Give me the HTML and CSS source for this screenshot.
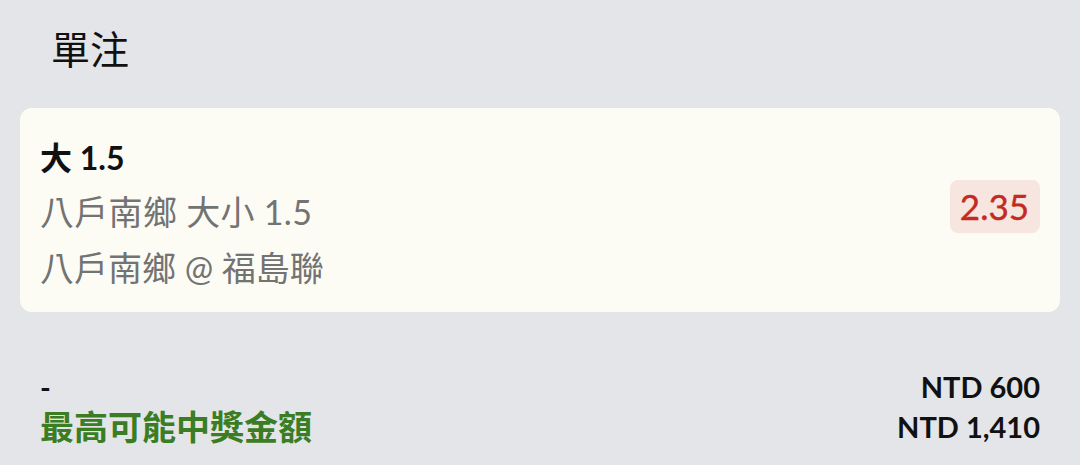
FILE: index.html
```html
<!DOCTYPE html>
<html lang="zh-Hant">
<head>
  <meta charset="UTF-8" />
  <title>單注</title>
  <link rel="stylesheet" href="styles.css">
</head>
<body>
  <div class="page">
    <h1 class="title">單注</h1>

    <!-- 投注卡片 -->
    <div class="bet-card">
      <div class="bet-info">
        <div class="selection">大 1.5</div>
        <div class="market">八戶南鄉 大小 1.5</div>
        <div class="match">八戶南鄉 @ 福島聯</div>
      </div>
      <div class="odds">2.35</div>
    </div>

    <!-- 合計 -->
    <div class="summary">
      <div class="row">
        <span class="dash">-</span>
        <span class="amount">NTD 600</span>
      </div>
      <div class="row">
        <span class="payout-label">最高可能中獎金額</span>
        <span class="amount">NTD 1,410</span>
      </div>
    </div>
  </div>
</body>
</html>
```

FILE: styles.css
```css
body, html {
  margin: 0;
  height: 100%;
  background-color: #e4e5e9;
  font-family: Lato, "Noto Sans CJK TC", sans-serif;
  overflow: hidden;
}

.page {
  padding: 0 20px;
}

.title {
  margin: 0;
  padding: 26px 0 0 31px;
  height: 80px;
  box-sizing: border-box;
  font-size: 39px;
  font-weight: normal;
  line-height: 46px;
  color: #111;
}

.bet-card {
  margin-top: 28px;
  background-color: #fcfcf4;
  border-radius: 12px;
  padding: 24px 20px 16px 20px;
  display: flex;
  align-items: center;
  justify-content: space-between;
}

.bet-info {
  display: flex;
  flex-direction: column;
}

.selection {
  font-size: 32px;
  font-weight: bold;
  line-height: 52px;
  color: #111;
}

.market, .match {
  font-size: 34px;
  line-height: 56px;
  color: #737373;
}

.market {
  letter-spacing: 0.3px;
}

.odds {
  background-color: #f7e5df;
  color: #c42a22;
  font-size: 35px;
  line-height: 53px;
  padding: 0 11px 0 10px;
  border-radius: 8px;
  margin-top: -16px;
  -webkit-text-stroke: 0.4px #c42a22;
}

.summary {
  margin-top: 55px;
  padding: 0 20px;
}

.row {
  display: flex;
  justify-content: space-between;
  align-items: center;
}

.dash {
  font-size: 29px;
  font-weight: bold;
  line-height: 40px;
  color: #111;
}

.amount {
  font-size: 29px;
  font-weight: bold;
  line-height: 40px;
  color: #111;
}

.payout-label {
  font-size: 34px;
  font-weight: bold;
  line-height: 40px;
  color: #3b7d23;
}
```
